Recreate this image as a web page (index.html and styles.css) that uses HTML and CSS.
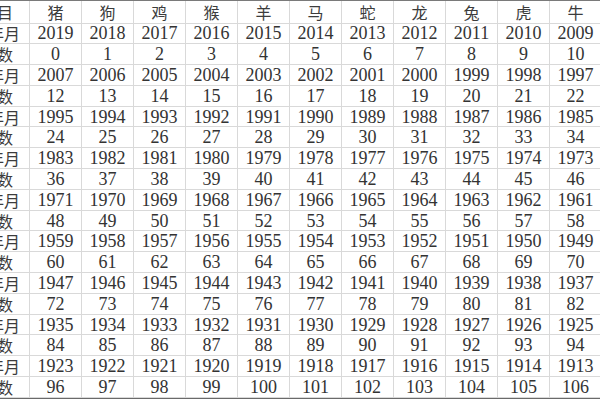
FILE: index.html
```html
<!DOCTYPE html>
<html lang="zh">
<head>
<meta charset="utf-8">
<link rel="stylesheet" href="styles.css">
</head>
<body>
<div class="sheet">
  <div class="grid">
    <div class="c lbl hd">项目</div><div class="c zh">猪</div><div class="c zh">狗</div><div class="c zh">鸡</div><div class="c zh">猴</div><div class="c zh">羊</div><div class="c zh">马</div><div class="c zh">蛇</div><div class="c zh">龙</div><div class="c zh">兔</div><div class="c zh">虎</div><div class="c zh">牛</div>

    <div class="c lbl yr">出生年月</div><div class="c">2019</div><div class="c">2018</div><div class="c">2017</div><div class="c">2016</div><div class="c">2015</div><div class="c">2014</div><div class="c">2013</div><div class="c">2012</div><div class="c">2011</div><div class="c">2010</div><div class="c">2009</div>
    <div class="c lbl">虚岁数</div><div class="c">0</div><div class="c">1</div><div class="c">2</div><div class="c">3</div><div class="c">4</div><div class="c">5</div><div class="c">6</div><div class="c">7</div><div class="c">8</div><div class="c">9</div><div class="c">10</div>

    <div class="c lbl yr">出生年月</div><div class="c">2007</div><div class="c">2006</div><div class="c">2005</div><div class="c">2004</div><div class="c">2003</div><div class="c">2002</div><div class="c">2001</div><div class="c">2000</div><div class="c">1999</div><div class="c">1998</div><div class="c">1997</div>
    <div class="c lbl">虚岁数</div><div class="c">12</div><div class="c">13</div><div class="c">14</div><div class="c">15</div><div class="c">16</div><div class="c">17</div><div class="c">18</div><div class="c">19</div><div class="c">20</div><div class="c">21</div><div class="c">22</div>

    <div class="c lbl yr">出生年月</div><div class="c">1995</div><div class="c">1994</div><div class="c">1993</div><div class="c">1992</div><div class="c">1991</div><div class="c">1990</div><div class="c">1989</div><div class="c">1988</div><div class="c">1987</div><div class="c">1986</div><div class="c">1985</div>
    <div class="c lbl">虚岁数</div><div class="c">24</div><div class="c">25</div><div class="c">26</div><div class="c">27</div><div class="c">28</div><div class="c">29</div><div class="c">30</div><div class="c">31</div><div class="c">32</div><div class="c">33</div><div class="c">34</div>

    <div class="c lbl yr">出生年月</div><div class="c">1983</div><div class="c">1982</div><div class="c">1981</div><div class="c">1980</div><div class="c">1979</div><div class="c">1978</div><div class="c">1977</div><div class="c">1976</div><div class="c">1975</div><div class="c">1974</div><div class="c">1973</div>
    <div class="c lbl">虚岁数</div><div class="c">36</div><div class="c">37</div><div class="c">38</div><div class="c">39</div><div class="c">40</div><div class="c">41</div><div class="c">42</div><div class="c">43</div><div class="c">44</div><div class="c">45</div><div class="c">46</div>

    <div class="c lbl yr">出生年月</div><div class="c">1971</div><div class="c">1970</div><div class="c">1969</div><div class="c">1968</div><div class="c">1967</div><div class="c">1966</div><div class="c">1965</div><div class="c">1964</div><div class="c">1963</div><div class="c">1962</div><div class="c">1961</div>
    <div class="c lbl">虚岁数</div><div class="c">48</div><div class="c">49</div><div class="c">50</div><div class="c">51</div><div class="c">52</div><div class="c">53</div><div class="c">54</div><div class="c">55</div><div class="c">56</div><div class="c">57</div><div class="c">58</div>

    <div class="c lbl yr">出生年月</div><div class="c">1959</div><div class="c">1958</div><div class="c">1957</div><div class="c">1956</div><div class="c">1955</div><div class="c">1954</div><div class="c">1953</div><div class="c">1952</div><div class="c">1951</div><div class="c">1950</div><div class="c">1949</div>
    <div class="c lbl">虚岁数</div><div class="c">60</div><div class="c">61</div><div class="c">62</div><div class="c">63</div><div class="c">64</div><div class="c">65</div><div class="c">66</div><div class="c">67</div><div class="c">68</div><div class="c">69</div><div class="c">70</div>

    <div class="c lbl yr">出生年月</div><div class="c">1947</div><div class="c">1946</div><div class="c">1945</div><div class="c">1944</div><div class="c">1943</div><div class="c">1942</div><div class="c">1941</div><div class="c">1940</div><div class="c">1939</div><div class="c">1938</div><div class="c">1937</div>
    <div class="c lbl">虚岁数</div><div class="c">72</div><div class="c">73</div><div class="c">74</div><div class="c">75</div><div class="c">76</div><div class="c">77</div><div class="c">78</div><div class="c">79</div><div class="c">80</div><div class="c">81</div><div class="c">82</div>

    <div class="c lbl yr">出生年月</div><div class="c">1935</div><div class="c">1934</div><div class="c">1933</div><div class="c">1932</div><div class="c">1931</div><div class="c">1930</div><div class="c">1929</div><div class="c">1928</div><div class="c">1927</div><div class="c">1926</div><div class="c">1925</div>
    <div class="c lbl">虚岁数</div><div class="c">84</div><div class="c">85</div><div class="c">86</div><div class="c">87</div><div class="c">88</div><div class="c">89</div><div class="c">90</div><div class="c">91</div><div class="c">92</div><div class="c">93</div><div class="c">94</div>

    <div class="c lbl yr">出生年月</div><div class="c">1923</div><div class="c">1922</div><div class="c">1921</div><div class="c">1920</div><div class="c">1919</div><div class="c">1918</div><div class="c">1917</div><div class="c">1916</div><div class="c">1915</div><div class="c">1914</div><div class="c">1913</div>
    <div class="c lbl">虚岁数</div><div class="c">96</div><div class="c">97</div><div class="c">98</div><div class="c">99</div><div class="c">100</div><div class="c">101</div><div class="c">102</div><div class="c">103</div><div class="c">104</div><div class="c">105</div><div class="c">106</div>
  </div>
</div>
</body>
</html>
```

FILE: styles.css
```css
html, body {
  margin: 0;
  padding: 0;
  background: #ffffff;
  overflow: hidden;
}

.sheet {
  width: 600px;
  height: 400px;
  overflow: hidden;
}

.grid {
  display: grid;
  grid-template-columns: 90px repeat(11, 52px);
  grid-template-rows: 22.5px repeat(18, 20.8px);
  margin-left: -60px;
  border-top: 1.5px solid #7a7a7a;
  border-bottom: 3px double #6a6a6a;
  width: max-content;
  font-family: "Liberation Serif", "DejaVu Serif", serif;
  font-size: 18px;
  color: #333333;
}

.c {
  box-sizing: border-box;
  border-right: 1px solid #d9d9d9;
  border-bottom: 1px solid #d9d9d9;
  display: flex;
  align-items: center;
  justify-content: center;
  white-space: nowrap;
  line-height: 1;
  overflow: hidden;
}

.zh, .lbl {
  font-family: "Noto Sans CJK SC", "Noto Sans", sans-serif;
  font-size: 16px;
  color: #3c3c3c;
}

.lbl {
  justify-content: flex-end;
  padding-right: 16px;
}

.lbl.yr {
  padding-right: 9px;
}
```
